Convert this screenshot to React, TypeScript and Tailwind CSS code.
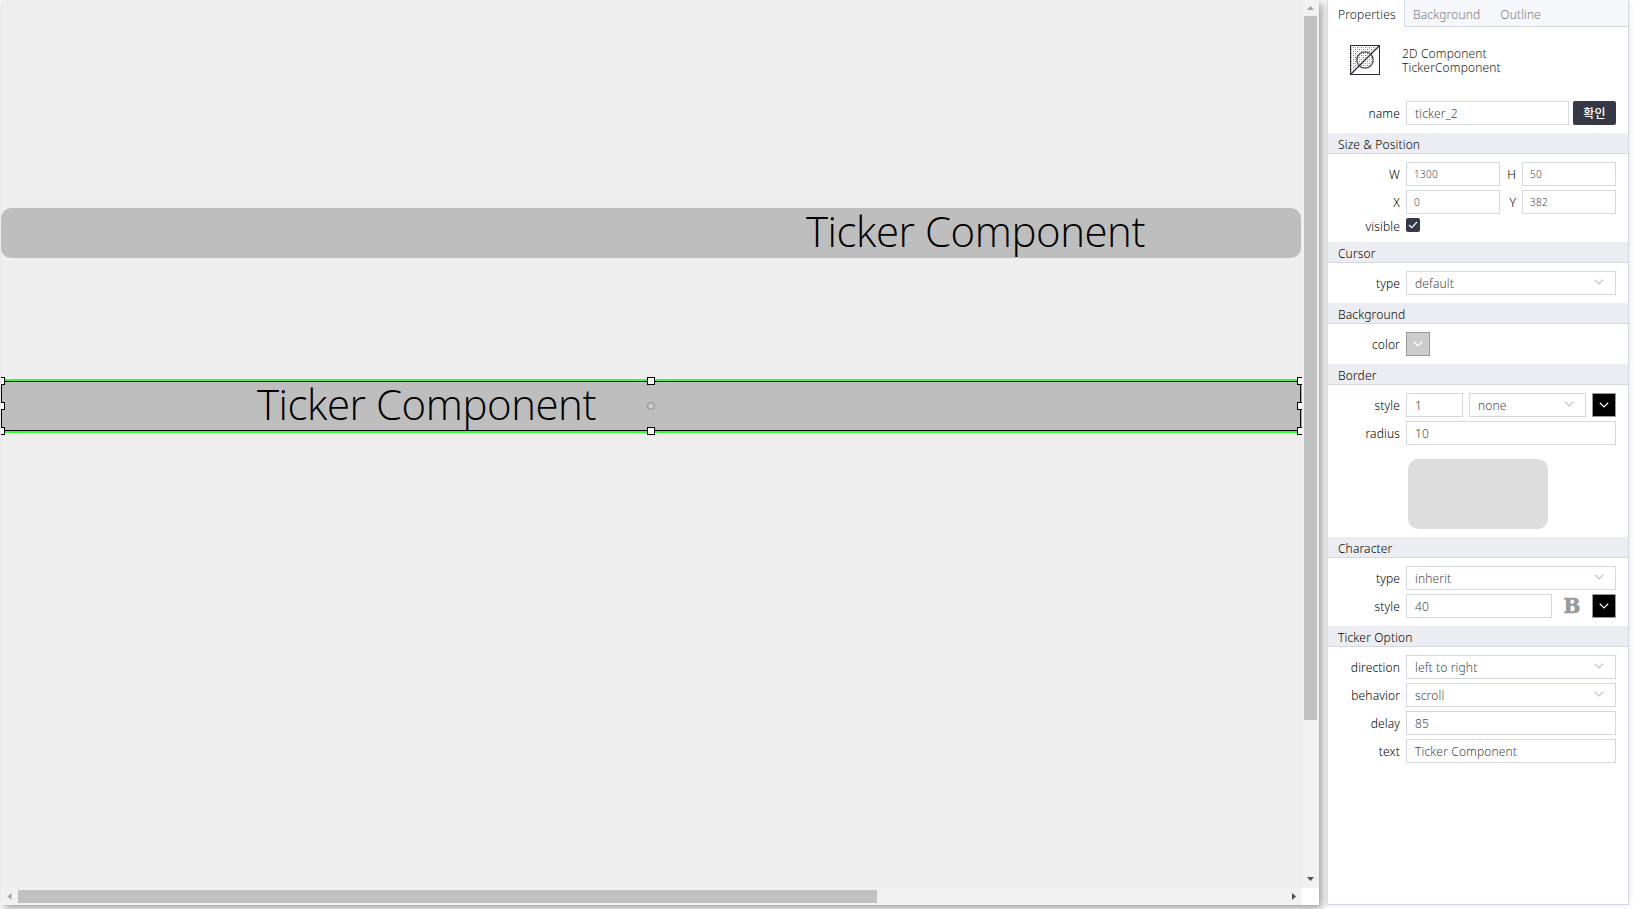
import type { ReactNode } from "react";

const fieldBase = "h-6 border border-[#d3d8e2] bg-white flex items-center text-[#45474b]";

function Chevron({ className }: { className: string }) {
  return (
    <svg width="10" height="6" viewBox="0 0 10 6" fill="none" className={className}>
      <path d="M0.8 0.8 L5 4.9 L9.2 0.8" stroke="currentColor" strokeWidth="1.2" />
    </svg>
  );
}

function Label({ children }: { children: ReactNode }) {
  return <div className="w-[72px] shrink-0 text-right text-black mr-1.5 pt-px">{children}</div>;
}

function Row({ label, children }: { label: string; children: ReactNode }) {
  return (
    <div className="flex h-6 items-center">
      <Label>{label}</Label>
      {children}
    </div>
  );
}

function Field({ value, width }: { value: string; width: string }) {
  return <div className={`${fieldBase} ${width} pl-2`}>{value}</div>;
}

function SmallField({ value }: { value: string }) {
  return <div className={`${fieldBase} w-[94px] pl-[7px] pt-px text-[10px] tracking-[0.3px]`}>{value}</div>;
}

function Select({ value, width }: { value: string; width: string }) {
  return (
    <div className={`${fieldBase} ${width} justify-between pl-2 pr-[11px]`}>
      <span>{value}</span>
      <Chevron className="mb-0.5 text-[#c0c4cc]" />
    </div>
  );
}

function Swatch({ color }: { color: string }) {
  return (
    <div className={`flex size-6 items-center justify-center border border-[#999] text-white ${color}`}>
      <Chevron className="mb-px" />
    </div>
  );
}

function Section({ title, children }: { title: string; children: ReactNode }) {
  return (
    <section>
      <h2 className="h-[21px] border-b border-[#d3d8e2] bg-[#ebedf2] pl-2.5 pt-0.5 font-light leading-[19px] text-black">{title}</h2>
      <div className="flex flex-col gap-1 py-2">{children}</div>
    </section>
  );
}

function ComponentIcon() {
  return (
    <svg width="30" height="30" viewBox="0 0 30 30" fill="none">
      <defs>
        <pattern id="dots" width="4" height="4" patternUnits="userSpaceOnUse">
          <rect x="1" y="0" width="1" height="1" fill="#70727d" />
          <rect x="3" y="2" width="1" height="1" fill="#70727d" />
          <rect x="3" y="0" width="1" height="1" fill="#c4c5ca" />
          <rect x="1" y="2" width="1" height="1" fill="#c4c5ca" />
        </pattern>
      </defs>
      <path d="M1 1H29L1 29Z" fill="url(#dots)" />
      <circle cx="15" cy="15" r="8.2" fill="url(#dots)" stroke="#4b4d57" strokeWidth="1.3" />
      <path d="M1 29L29 1" stroke="#2b2d38" strokeWidth="1.2" />
      <rect x="0.5" y="0.5" width="29" height="29" stroke="#2b2d38" />
    </svg>
  );
}

function Handle({ place }: { place: string }) {
  return <div className={`absolute size-2 border border-black bg-white ${place}`} />;
}

function TickerText({ place }: { place: string }) {
  return (
    <span className={`absolute whitespace-nowrap font-['Open_Sans','Noto_Sans',sans-serif] text-[42px] font-light leading-[50px] tracking-[-0.45px] text-black ${place}`}>
      Ticker Component
    </span>
  );
}

function Canvas() {
  return (
    <main className="grid h-[905px] w-[1318px] shrink-0 grid-cols-[1301px_17px] grid-rows-[888px_17px] shadow-[3px_3px_8px_rgba(0,0,0,0.4)]">
      <div className="relative overflow-hidden bg-[#eee]">
        <div className="absolute left-0 top-[208px] h-[50px] w-[1300px] rounded-[10px] bg-[#bebebe]">
          <TickerText place="left-[805px] -top-[2px]" />
        </div>
        <div className="absolute left-0 top-[381px] h-[50px] w-[1300px] border border-black bg-[#bebebe] shadow-[0_0_0_2px_#33ff33]">
          <TickerText place="left-[255px] -top-[3px]" />
          <Handle place="-left-[5px] -top-[5px]" />
          <Handle place="-left-[5px] top-5" />
          <Handle place="-left-[5px] top-[45px]" />
          <Handle place="left-[645px] -top-[5px]" />
          <Handle place="left-[645px] top-[45px]" />
          <Handle place="left-[1295px] -top-[5px]" />
          <Handle place="left-[1295px] top-5" />
          <Handle place="left-[1295px] top-[45px]" />
          <div className="absolute left-[645px] top-5 size-2 rounded-full border border-[#888] bg-[#ccc]" />
        </div>
      </div>
      <div className="flex flex-col items-center bg-[#f1f1f1]">
        <svg width="17" height="16" viewBox="0 0 17 16"><path d="M5 10L8.5 6L12 10Z" fill="#a3a3a3" /></svg>
        <div className="h-[704px] w-[13px] bg-[#c1c1c1]" />
        <svg className="mt-auto" width="17" height="17" viewBox="0 0 17 17"><path d="M5 6H12L8.5 10Z" fill="#505050" /></svg>
      </div>
      <div className="flex items-center bg-[#f1f1f1]">
        <svg width="17" height="17" viewBox="0 0 17 17"><path d="M10.5 5V12L6.5 8.5Z" fill="#a3a3a3" /></svg>
        <div className="h-[13px] w-[859px] bg-[#c1c1c1]" />
        <svg className="ml-auto" width="17" height="17" viewBox="0 0 17 17"><path d="M7 5V12L11 8.5Z" fill="#505050" /></svg>
      </div>
      <div className="bg-white" />
    </main>
  );
}

function PropertiesPanel() {
  return (
    <aside className="ml-2 h-[905px] w-[302px] shrink-0 border border-t-0 border-[#d3d8e2] bg-white font-light tracking-[0.14px] shadow-[0_0_6px_rgba(0,0,0,0.12)]">
      <nav className="flex h-[27px] text-[#787b82]">
        <div className="w-[76px] bg-white pl-2.5 pt-1.5 leading-[17px] text-[#202123]">Properties</div>
        <div className="flex flex-1 gap-5 border-b border-l border-[#d3d8e2] bg-[#f5f7fb] pl-2 pt-1.5 leading-[17px]">
          <span>Background</span>
          <span>Outline</span>
        </div>
      </nav>
      <div className="flex h-[74px] pl-[22px] pt-[18px]">
        <ComponentIcon />
        <div className="ml-[22px] pt-0.5 leading-[14px] text-[#202123]">
          <div>2D Component</div>
          <div>TickerComponent</div>
        </div>
      </div>
      <div className="mb-2">
        <Row label="name">
          <Field value="ticker_2" width="w-[163px]" />
          <div className="ml-1 flex h-6 w-[43px] items-center justify-center rounded-[2px] bg-[#353945] text-[12px] font-medium text-white">확인</div>
        </Row>
      </div>
      <Section title="Size & Position">
        <Row label="W">
          <SmallField value="1300" />
          <span className="w-4 pt-px text-right text-black mr-1.5">H</span>
          <SmallField value="50" />
        </Row>
        <Row label="X">
          <SmallField value="0" />
          <span className="w-4 pt-px text-right text-black mr-1.5">Y</span>
          <SmallField value="382" />
        </Row>
        <div className="mb-0.5 flex h-[14px] items-center">
          <Label><span className="relative top-px">visible</span></Label>
          <div className="flex size-[14px] items-center justify-center rounded-[2px] bg-[#353945]">
            <svg width="10" height="8" viewBox="0 0 10 8" fill="none"><path d="M1 4L3.7 6.6L9 1" stroke="white" strokeWidth="1.2" /></svg>
          </div>
        </div>
      </Section>
      <Section title="Cursor">
        <Row label="type"><Select value="default" width="w-[210px]" /></Row>
      </Section>
      <Section title="Background">
        <Row label="color"><Swatch color="bg-[#ccc]" /></Row>
      </Section>
      <Section title="Border">
        <Row label="style">
          <div className="flex gap-1.5">
            <Field value="1" width="w-[57px]" />
            <Select value="none" width="w-[117px]" />
            <Swatch color="bg-black" />
          </div>
        </Row>
        <Row label="radius"><Field value="10" width="w-[210px]" /></Row>
        <div className="ml-20 mt-2.5 h-[70px] w-[140px] rounded-[10px] bg-[#ddd]" />
      </Section>
      <Section title="Character">
        <Row label="type"><Select value="inherit" width="w-[210px]" /></Row>
        <Row label="style">
          <Field value="40" width="w-[146px]" />
          <span className="w-10 text-center font-['DejaVu_Serif',serif] text-[20px] font-bold leading-6 text-[#999] [-webkit-text-stroke:0.6px_#999]">B</span>
          <Swatch color="bg-black" />
        </Row>
      </Section>
      <Section title="Ticker Option">
        <Row label="direction"><Select value="left to right" width="w-[210px]" /></Row>
        <Row label="behavior"><Select value="scroll" width="w-[210px]" /></Row>
        <Row label="delay"><Field value="85" width="w-[210px]" /></Row>
        <Row label="text"><Field value="Ticker Component" width="w-[210px]" /></Row>
      </Section>
    </aside>
  );
}

export default function App() {
  return (
    <div className="flex h-[909px] w-[1633px] overflow-hidden bg-white pl-px font-['Noto_Sans','Noto_Sans_CJK_KR',sans-serif] text-[12px] leading-[17px]">
      <Canvas />
      <PropertiesPanel />
    </div>
  );
}
